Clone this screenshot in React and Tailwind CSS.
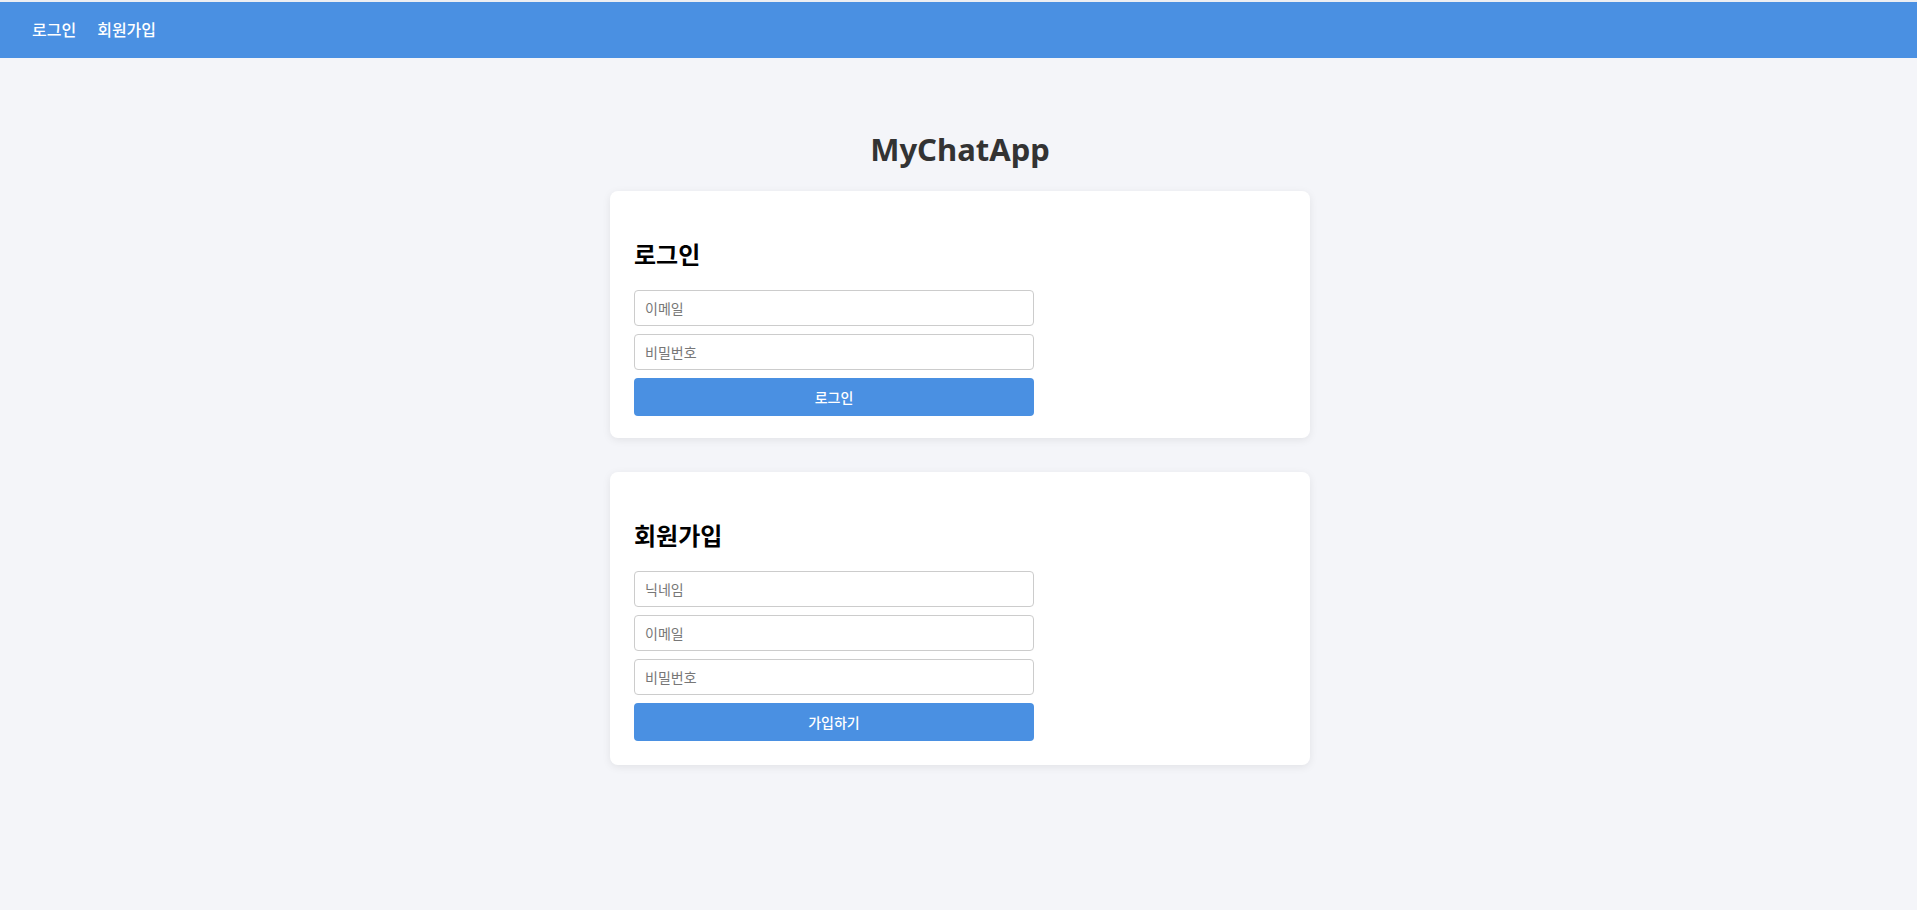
export default function App() {
  const font = { fontFamily: '"Noto Sans", "Noto Sans CJK KR", sans-serif' };
  const inputCls =
    "block w-[400px] h-[36px] border border-[#cccccc] rounded-[4px] px-[10px] text-[14px] text-[#333] placeholder:text-[#777] bg-white outline-none";
  const btnCls =
    "block w-[400px] h-[38px] rounded-[4px] bg-[#4a90e2] text-white text-[14px] font-medium";
  return (
    <div className="min-h-[910px] bg-[#f4f5f9]" style={font}>
      <div className="h-[2px] bg-[#eceef2]" />
      <nav className="h-[56px] bg-[#4a90e2] flex items-center pl-[32px] gap-[21px] text-white text-[16px] font-medium">
        <span>로그인</span>
        <span>회원가입</span>
      </nav>
      <main className="flex flex-col items-center pt-[71px] pl-[3px]">
        <h1 className="text-[31px] leading-[40px] font-bold text-[#333333]">MyChatApp</h1>
        <div className="w-[700px] mt-[22px] flex flex-col gap-[34px]">
          <section className="bg-white rounded-[8px] shadow-[0_2px_8px_rgba(0,0,0,0.08)] px-[24px] pt-[47px] pb-[22px]">
            <h2 className="text-[24px] leading-[34px] font-bold text-black">로그인</h2>
            <div className="mt-[18px] flex flex-col gap-[8px]">
              <input className={inputCls} placeholder="이메일" />
              <input className={inputCls} type="password" placeholder="비밀번호" />
              <button className={btnCls}>로그인</button>
            </div>
          </section>
          <section className="bg-white rounded-[8px] shadow-[0_2px_8px_rgba(0,0,0,0.08)] px-[24px] pt-[47px] pb-[24px]">
            <h2 className="text-[24px] leading-[34px] font-bold text-black">회원가입</h2>
            <div className="mt-[18px] flex flex-col gap-[8px]">
              <input className={inputCls} placeholder="닉네임" />
              <input className={inputCls} placeholder="이메일" />
              <input className={inputCls} type="password" placeholder="비밀번호" />
              <button className={btnCls}>가입하기</button>
            </div>
          </section>
        </div>
      </main>
    </div>
  );
}
